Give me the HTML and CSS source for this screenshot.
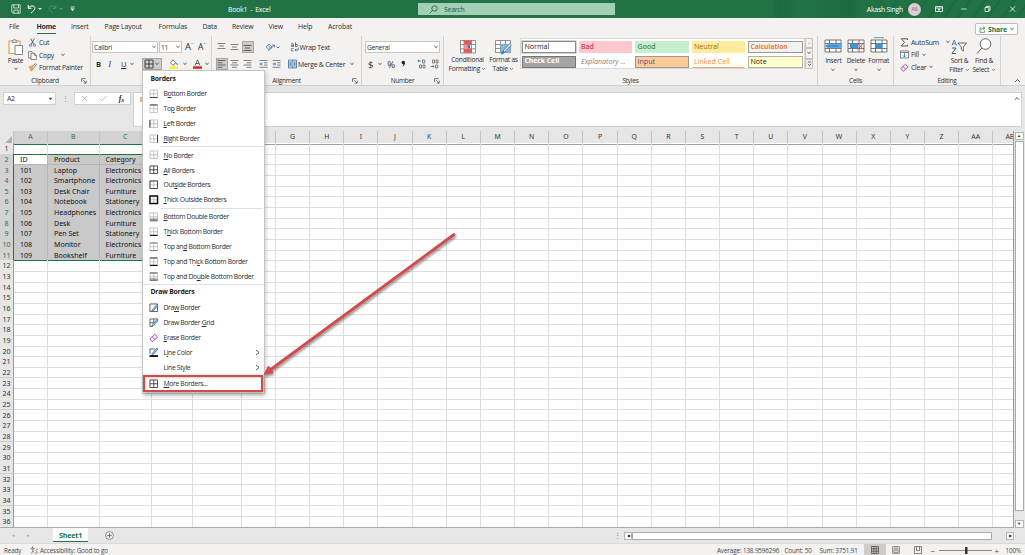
FILE: index.html
```html
<!DOCTYPE html>
<html lang="en">
<head>
<meta charset="utf-8">
<title>Book1 - Excel</title>
<link rel="stylesheet" href="styles.css">
</head>
<body>
<svg class="sprite" width="0" height="0">
  <symbol id="chev" viewBox="0 0 6 4"><path d="M1.4 1 3 2.500 4.600 1" fill="none" stroke="#444" stroke-width=".9"/></symbol>
  <symbol id="launch" viewBox="0 0 6 6"><path d="M.6 4V.6H4.500M2.300 2.300 5 5M5.200 2.600V5.200H2.600" fill="none" stroke="#555" stroke-width=".8"/></symbol>
  <symbol id="base" viewBox="0 0 10 10"><path d="M1 1H9V9H1ZM5 1V9M1 5H9" fill="none" stroke="#b4b4b4" stroke-width=".8"/></symbol>
  <symbol id="all" viewBox="0 0 10 10"><path d="M1 1H9V9H1ZM5 1V9M1 5H9" fill="none" stroke="#333" stroke-width=".9"/></symbol>
  <symbol id="pen" viewBox="0 0 10 10"><path d="M3.500 7 8.300 1.500 9.500 2.600 4.800 8 3 8.500Z" fill="#8cc4ee" stroke="#2b6fae" stroke-width=".8"/></symbol>
  <symbol id="eraser" viewBox="0 0 10 10"><path d="M1 6.300 6 1.300 9 4.200 4.200 9H3.300ZM3.300 4 6.300 7" fill="#fbeffc" stroke="#8c3a9c" stroke-width=".9"/></symbol>
  <symbol id="table" viewBox="0 0 18 14"><path d="M1 1H17V13H1ZM1 4.500H17M1 9.500H17M5.500 1V13M12 1V13" fill="#fff" stroke="#555" stroke-width=".8"/></symbol>
</svg>
<div class="app">
  <header class="titlebar">
    <div class="quick">
      <svg width="10" height="10" viewBox="0 0 10 10"><path d="M.8.800H9.200V9.200H2L.8 8ZM2.800.800V4H7.500V.8M2.800 9V6.200H7.300V9" fill="none" stroke="#e5f2ea" stroke-width=".8"/></svg>
      <svg width="16" height="10" viewBox="0 0 16 10"><path d="M1.200 1V4.300H4.500M1.500 4C4 .8 8 1.500 7.800 4.400 7.700 6.200 6 7.200 4 9" fill="none" stroke="#fff" stroke-width="1"/><path d="M11 4h4l-2 2z" fill="#d5eadd"/></svg>
      <svg width="16" height="10" viewBox="0 0 16 10"><path d="M7.800 1V4.300H4.500M7.500 4C5 .8 1 1.500 1.200 4.400 1.300 6.200 3 7.200 5 9" fill="none" stroke="#4f9770" stroke-width="1"/><path d="M11 4h4l-2 2z" fill="#4f9770"/></svg>
      <svg width="5" height="6" viewBox="0 0 5 6"><path d="M.5 1h4" stroke="#fff" stroke-width=".8"/><path d="M.3 2.500h4.400L2.500 5z" fill="#fff"/></svg>
    </div>
    <div class="doc">Book1&nbsp; -&nbsp; Excel</div>
    <div class="search"><svg width="9" height="9" viewBox="0 0 9 9"><circle cx="5.500" cy="3.500" r="2.700" fill="none" stroke="#185c37" stroke-width=".8"/><path d="M3.600 5.400.7 8.300" stroke="#185c37" stroke-width=".8"/></svg><span>Search</span></div>
    <div class="account"><span>Akash Singh</span><b class="avatar">AS</b></div>
    <div class="winbtns">
      <svg width="8" height="8" viewBox="0 0 8 8"><path d="M.5 1.500H7.500V6.500H.5ZM.5 3H7.500M4 6V3.800M3 4.800 4 3.800 5 4.800" fill="none" stroke="#fff" stroke-width=".8"/></svg>
      <svg width="6" height="8" viewBox="0 0 6 8"><path d="M.5 4H5.500" stroke="#fff" stroke-width=".8"/></svg>
      <svg width="7" height="8" viewBox="0 0 7 8"><path d="M1 2.500H4.800V6.500H1ZM2.300 2.300V1.300H6V5.300H5" fill="none" stroke="#fff" stroke-width=".8"/></svg>
      <svg width="7" height="8" viewBox="0 0 7 8"><path d="M1 1.500 6 6.500M6 1.500 1 6.500" stroke="#fff" stroke-width=".8"/></svg>
    </div>
  </header>

  <nav class="tabs">
    <span>File</span><span class="active"><b>Home</b></span><span>Insert</span><span>Page Layout</span><span>Formulas</span><span>Data</span><span>Review</span><span>View</span><span>Help</span><span>Acrobat</span>
    <div class="share"><svg width="7" height="7" viewBox="0 0 7 7"><path d="M2.500 2H1V6.300H5.500V4.500M2.300 4.300C2.500 2.800 3.500 2.200 5 2.200M4 .7 6 2.200 4.200 3.800" fill="none" stroke="#217346" stroke-width=".7"/></svg><b>Share</b><svg width="6" height="4"><use href="#chev"/></svg></div>
  </nav>

  <section class="ribbon">
    <div class="group clipboard">
      <div class="body">
        <div class="big paste"><svg width="17" height="18" viewBox="0 0 17 18"><path d="M2 3H13V15.500H2Z" fill="#fbfbfb" stroke="#eba13c" stroke-width="1.200"/><path d="M5 4.500V2.500H6.200C6.500.8 8.500.8 8.800 2.500H10V4.500Z" fill="#ddd" stroke="#777" stroke-width=".7"/><path d="M8 7.500H15.500V16.500H8Z" fill="#fff" stroke="#666" stroke-width=".8"/></svg><span>Paste</span><svg width="6" height="4"><use href="#chev"/></svg></div>
        <div class="stack">
          <div><svg width="9" height="9" viewBox="0 0 9 9"><path d="M2.700.5 5.800 6.500M6.300.5 3.200 6.500" stroke="#444" stroke-width=".8"/><circle cx="2.500" cy="7.300" r="1.100" fill="none" stroke="#2b7cc0" stroke-width=".9"/><circle cx="6.500" cy="7.300" r="1.100" fill="none" stroke="#2b7cc0" stroke-width=".9"/></svg>Cut</div>
          <div><svg width="9" height="9" viewBox="0 0 9 9"><path d="M3 7H.7V.7H4.300L5 1.500M3 2.300H6.500L8.300 4V8.500H3ZM6.300 2.300V4.200H8.300" fill="#fff" stroke="#555" stroke-width=".7"/></svg>Copy<svg class="far" width="6" height="4"><use href="#chev"/></svg></div>
          <div><svg width="9" height="9" viewBox="0 0 9 9"><path d="M.5 3.500 4 2.500 6 5.500 4 8.500 2.500 7.800Z" fill="#f1a144"/><path d="M4 3.500 7.500.7 8.500 1.800 5.500 5" fill="#fff" stroke="#555" stroke-width=".8"/></svg>Format Painter</div>
        </div>
      </div>
      <div class="caption">Clipboard<svg width="6" height="6"><use href="#launch"/></svg></div>
    </div>

    <div class="group font">
      <div class="line one">
        <div class="combo face">Calibri<svg width="6" height="4"><use href="#chev"/></svg></div><div class="combo size">11<svg width="6" height="4"><use href="#chev"/></svg></div>
        <span class="grow">A<sup>ˆ</sup></span><span class="grow small">A<sup>ˇ</sup></span>
      </div>
      <div class="line two">
        <b>B</b><i>I</i><u>U</u><svg width="6" height="4"><use href="#chev"/></svg>
        <div class="pressed bord"><svg width="10" height="10"><use href="#all"/></svg><svg width="6" height="4"><use href="#chev"/></svg></div>
        <svg width="9" height="10" viewBox="0 0 9 10"><path d="M4 .8 7 3.800 4 6.300 1.500 3.800Z" fill="#fff" stroke="#555" stroke-width=".8"/><path d="M7.500 4 8.500 6" stroke="#2b7cc0"/><path d="M0 7.300H9V9.800H0Z" fill="#fbf32c"/></svg><svg width="6" height="4"><use href="#chev"/></svg>
        <svg width="9" height="10" viewBox="0 0 9 10"><path d="M2 6.500 4.500.8 7 6.500M3 4.500H6" fill="none" stroke="#555" stroke-width=".9"/><path d="M0 7.300H9V9.800H0Z" fill="#e0262c"/></svg><svg width="6" height="4"><use href="#chev"/></svg>
      </div>
      <div class="caption hidden-part">Font</div>
    </div>

    <div class="group align">
      <div class="line al">
        <svg width="9" height="10" viewBox="0 0 9 10"><path d="M.5 1.500H8.500M2 4H7M.5 6.500H8.500" stroke="#666" stroke-width=".8"/></svg>
        <svg width="9" height="10" viewBox="0 0 9 10"><path d="M.5 2.500H8.500M2 5H7M.5 7.500H8.500" stroke="#666" stroke-width=".8"/></svg>
        <span class="pressed"><svg width="9" height="10" viewBox="0 0 9 10"><path d="M.5 3.500H8.500M2 6H7M.5 8.500H8.500" stroke="#444" stroke-width=".8"/></svg></span>
        <svg class="orient" width="17" height="10" viewBox="0 0 17 10"><path d="M1 5 4 2 7 5 4 7.500ZM3 3.500 6 6.500M3 9 9 3.500M7 3H9.500V5.500" fill="none" stroke="#41719c" stroke-width=".8"/><path d="M11.500 4.500 13 6 14.500 4.500" fill="none" stroke="#444" stroke-width=".8"/></svg>
        <div class="cmd"><svg width="9" height="10" viewBox="0 0 9 10"><path d="M1 2Q3.500 1 3.500 2.500V4.700M3.500 3.200Q1 3 1 4 1.500 5.200 3.500 4M5.500.3V4.700Q8 4.800 7.900 3.200 7.500 1.800 5.500 2.500M3.500 6.500Q1 6 1 7.700 1.200 9.500 3.500 8.900" fill="none" stroke="#555" stroke-width=".8"/><path d="M5 8H8.200V5.700M6.200 6.800 4.900 8 6.200 9.200" fill="none" stroke="#2b7cc0" stroke-width=".9"/></svg>Wrap Text</div>
      </div>
      <div class="line al two">
        <span class="pressed"><svg width="9" height="10" viewBox="0 0 9 10"><path d="M.5 1.500H8.500M.5 3.800H5.500M.5 6H8.500M.5 8.300H5.500" stroke="#444" stroke-width=".8"/></svg></span>
        <svg width="9" height="10" viewBox="0 0 9 10"><path d="M.5 1.500H8.500M2 3.800H7M.5 6H8.500M2 8.300H7" stroke="#666" stroke-width=".8"/></svg>
        <svg width="9" height="10" viewBox="0 0 9 10"><path d="M.5 1.500H8.500M3.500 3.800H8.500M.5 6H8.500M3.500 8.300H8.500" stroke="#666" stroke-width=".8"/></svg>
        <svg class="ind" width="9" height="10" viewBox="0 0 9 10"><path d="M.5 1.500H8.500M5 3.800H8.500M5 6H8.500M.5 8.300H8.500" stroke="#666" stroke-width=".8"/><path d="M4 5H1M2.300 3.500.8 5 2.300 6.500" fill="none" stroke="#2b7cc0" stroke-width=".9"/></svg>
        <svg width="9" height="10" viewBox="0 0 9 10"><path d="M.5 1.500H8.500M5 3.800H8.500M5 6H8.500M.5 8.300H8.500" stroke="#666" stroke-width=".8"/><path d="M.5 5H3.500M2.300 3.500 3.800 5 2.300 6.500" fill="none" stroke="#2b7cc0" stroke-width=".9"/></svg>
        <div class="cmd"><svg width="9" height="10" viewBox="0 0 9 10"><path d="M.5 1H8.500V9H.5Z" fill="#cfe6f8" stroke="#4a7296" stroke-width=".8"/><path d="M.5 3H8.500M.5 7H8.500M4.500 1V3M4.500 7V9" stroke="#4a7296" stroke-width=".7"/><path d="M1.500 5H7.500M3 4 1.800 5 3 6M6 4 7.200 5 6 6" fill="none" stroke="#1c6cb5" stroke-width=".7"/></svg><span class="merge">Merge &amp; Center</span><svg width="6" height="4"><use href="#chev"/></svg></div>
      </div>
      <div class="caption">Alignment<svg width="6" height="6"><use href="#launch"/></svg></div>
    </div>

    <div class="group number">
      <div class="line"><div class="combo general">General<svg width="6" height="4"><use href="#chev"/></svg></div></div>
      <div class="line num"><span>$</span><svg width="6" height="4"><use href="#chev"/></svg><span>%</span>
        <svg class="comma" width="5" height="8" viewBox="0 0 5 8"><circle cx="2.300" cy="2.500" r="1.700" fill="#222"/><path d="M4 2.500Q4 5.500 1.200 6.500 2.700 5 2.600 3.500Z" fill="#222"/></svg>
        <svg width="9" height="10" viewBox="0 0 9 10"><path d="M4 2H.8M2 .8.800 2 2 3.200" fill="none" stroke="#2b7cc0" stroke-width=".9"/><path d="M5.500 1H7.800V4H5.500ZM2.500 6H4.500V9H2.500ZM6 6H8V9H6Z" fill="none" stroke="#666" stroke-width=".8"/></svg>
        <svg width="9" height="10" viewBox="0 0 9 10"><path d="M2.500 1H4.500V4H2.500ZM6 1H8V4H6ZM5.500 6H7.800V9H5.500Z" fill="none" stroke="#666" stroke-width=".8"/><path d="M.5 7.500H4M2.800 6.300 4 7.500 2.800 8.700" fill="none" stroke="#2b7cc0" stroke-width=".9"/></svg></div>
      <div class="caption">Number<svg width="6" height="6"><use href="#launch"/></svg></div>
    </div>

    <div class="group styles">
      <div class="body">
        <div class="big cond"><svg width="16" height="14" viewBox="0 0 16 14"><path d="M.5.500H15.500V13H.5ZM.5 4.500H15.500M.5 8.800H15.500M4 .5V13M11.500.500V13" fill="#fff" stroke="#666" stroke-width=".7"/><path d="M4 .8H11V4.300H4ZM4 9H12V12.700H4Z" fill="#f0525a"/><path d="M4 4.700H8V8.600H4Z" fill="#f58d92"/><path d="M8 4.700H10V8.600H8Z" fill="#2b7cc0"/></svg><span>Conditional<br>Formatting <svg width="5" height="4"><use href="#chev"/></svg></span></div>
        <div class="big fmt"><svg width="17" height="15" viewBox="0 0 17 15"><path d="M.5.500H15.500V12.500H.5ZM.5 4.500H15.500M.5 8.500H15.500M5.500.500V12.500M10.500.500V12.500" fill="#fff" stroke="#666" stroke-width=".7"/><path d="M5.500 4.500H15.500V12.500H5.500Z" fill="#7db9ea"/><path d="M8 11 14.800 3.500 16.300 5 9.500 12Z" fill="#fff" stroke="#3a5f85" stroke-width=".7"/><path d="M5 14.300Q7 13.500 6.800 11.800L8.300 10.800 9.800 12.200Q9 14.500 5 14.300Z" fill="#2b7cc0"/></svg><span>Format as<br>Table <svg width="5" height="4"><use href="#chev"/></svg></span></div>
        <div class="gallery">
          <span class="s-normal">Normal</span><span class="s-bad">Bad</span><span class="s-good">Good</span><span class="s-neutral">Neutral</span><span class="s-calc">Calculation</span>
          <span class="s-check">Check Cell</span><span class="s-expl">Explanatory ...</span><span class="s-input">Input</span><span class="s-link">Linked Cell</span><span class="s-note">Note</span>
        </div>
        <div class="spin"><span><svg width="5" height="4" viewBox="0 0 5 4"><path d="M1 3 2.500 1.500 4 3" fill="none" stroke="#aaa" stroke-width=".7"/></svg></span><span><svg width="6" height="4"><use href="#chev"/></svg></span><span><svg width="5" height="6" viewBox="0 0 5 6"><path d="M.8 1H4.200M.8 2.800 2.500 4.500 4.200 2.800" fill="none" stroke="#444" stroke-width=".8"/></svg></span></div>
      </div>
      <div class="caption">Styles</div>
    </div>

    <div class="group cells">
      <div class="body">
        <div class="big"><svg width="18" height="14"><use href="#table"/><path d="M4 4.700H17.500V9.300H4L.5 7Z" fill="#5ea9e2"/><path d="M2.500 7H14" stroke="#1f65a5" stroke-width=".8"/></svg><span>Insert</span><svg width="6" height="4"><use href="#chev"/></svg></div>
        <div class="big"><svg width="18" height="14"><use href="#table"/><path d="M3 4.700H11V9.300H3Z" fill="#3f93d6"/><path d="M10.500 4 16.500 10.500M16.500 4 10.500 10.500" stroke="#e2474c" stroke-width="1"/></svg><span>Delete</span><svg width="6" height="4"><use href="#chev"/></svg></div>
        <div class="big"><svg width="18" height="16" viewBox="0 -2 18 16"><use href="#table" width="18" height="14"/><path d="M5.500 4.500H12.500V9.500H5.500Z" fill="#3f93d6"/><path d="M4 -1.300H14" stroke="#3f93d6" stroke-width=".9"/></svg><span>Format</span><svg width="6" height="4"><use href="#chev"/></svg></div>
      </div>
      <div class="caption">Cells</div>
    </div>

    <div class="group editing">
      <div class="body">
        <div class="stack">
          <div><svg width="9" height="9" viewBox="0 0 9 9"><path d="M7.500 2V.8H1.300L4.500 4.300 1.300 8H7.500V6.800" fill="none" stroke="#444" stroke-width=".9"/></svg>AutoSum<svg class="far" width="6" height="4"><use href="#chev"/></svg></div>
          <div><svg width="9" height="9" viewBox="0 0 9 9"><path d="M.5 1H8.500V8H.5ZM.5 2.500H8.500" fill="#fff" stroke="#555" stroke-width=".7"/><path d="M4.500 3.200V7M3 5.500 4.500 7 6 5.500" fill="none" stroke="#2b7cc0" stroke-width=".9"/></svg>Fill<svg width="6" height="4"><use href="#chev"/></svg></div>
          <div><svg width="9" height="9"><use href="#eraser"/></svg>Clear<svg width="6" height="4"><use href="#chev"/></svg></div>
        </div>
        <div class="big sort"><svg width="17" height="16" viewBox="0 0 17 16"><path d="M1 6.500 3.300 1 5.500 6.500M1.800 4.800H4.800" fill="none" stroke="#2b7cc0" stroke-width=".9"/><path d="M1 9H5L1 14.500H5.200" fill="none" stroke="#444" stroke-width=".9"/><path d="M7 4H15.500L12.300 8V12L10.300 10.500V8Z" fill="#fff" stroke="#555" stroke-width=".9"/></svg><span>Sort &amp;<br>Filter <svg width="5" height="4"><use href="#chev"/></svg></span></div>
        <div class="big find"><svg width="16" height="17" viewBox="0 0 16 17"><circle cx="9.500" cy="6" r="5.300" fill="#fff" stroke="#555" stroke-width=".9"/><path d="M6 10 1 15.500" stroke="#555" stroke-width="1"/></svg><span>Find &amp;<br>Select <svg width="5" height="4"><use href="#chev"/></svg></span></div>
      </div>
      <div class="caption">Editing</div>
    </div>
    <svg class="collapse" width="7" height="5" viewBox="0 0 7 5"><path d="M1 4 3.500 1.500 6 4" fill="none" stroke="#444" stroke-width=".9"/></svg>
  </section>

  <section class="formula">
    <div class="name">A2<svg width="5" height="4" viewBox="0 0 5 4"><path d="M.5.800H4.500L2.500 3.300Z" fill="#555"/></svg></div>
    <span class="dots">⋮</span>
    <div class="fx"><svg width="7" height="7" viewBox="0 0 7 7"><path d="M1 1 6 6M6 1 1 6" stroke="#aaa" stroke-width=".8"/></svg><svg width="8" height="7" viewBox="0 0 8 7"><path d="M.8 3.800 2.800 5.800 7.300 1" fill="none" stroke="#aaa" stroke-width=".8"/></svg><em>f<sub>x</sub></em></div>
    <div class="value"><span>ID</span><svg width="6" height="5" viewBox="0 0 7 5"><path d="M1 4 3.500 1.500 6 4" fill="none" stroke="#444" stroke-width="1"/></svg></div>
  </section>

  <main class="sheet">
    <div class="grid" id="grid"></div>
    <div class="vscroll"><span>▲</span><div class="thumb"></div><span>▼</span></div>
  </main>

  <div class="sheetbar">
    <span class="arrow">◂</span><span class="arrow">▸</span><b class="sheettab">Sheet1</b>
    <svg class="plus" width="9" height="9" viewBox="0 0 9 9"><circle cx="4.500" cy="4.500" r="4" fill="none" stroke="#777" stroke-width=".7"/><path d="M4.500 2.300V6.700M2.300 4.500H6.700" stroke="#666" stroke-width=".8"/></svg>
    <span class="grip">⋮</span>
    <div class="hscroll"><span>◀</span><div class="bar"></div><span>▶</span></div>
  </div>

  <footer class="status">
    <span class="ready">Ready</span>
    <svg width="8" height="8" viewBox="0 0 8 8"><circle cx="2.500" cy="1.300" r=".8" fill="#666"/><path d="M.5 2.800H5M2.800 3V5L1.500 7.500M2.800 5 4 6.500M7 2.500V4M7.500 6Q7 7.500 5 7.300M5.500 4.500 7.500 5.500" fill="none" stroke="#666" stroke-width=".8"/></svg>
    <span class="acc">Accessibility: Good to go</span>
    <span class="avg">Average: 138.9596296</span><span class="cnt">Count: 50</span><span class="sum">Sum: 3751.91</span>
    <div class="views">
      <span class="on"><svg width="8" height="8" viewBox="0 0 8 8"><path d="M.5.500H7.500V7.500H.5ZM.5 2.800H7.500M.5 5.200H7.500M2.800.500V7.500M5.200.500V7.500" fill="none" stroke="#444" stroke-width=".7"/></svg></span>
      <span><svg width="8" height="8" viewBox="0 0 8 8"><path d="M.5.500H7.500V7.500H.5ZM2 2H6V6.500H2ZM2.700 3.300H5.300M2.700 4.800H5.300" fill="none" stroke="#555" stroke-width=".6"/></svg></span>
      <span><svg width="8" height="8" viewBox="0 0 8 8"><path d="M.5.500H7.500V7.500H.5ZM2.500.500V4.500H5.500V.5" fill="none" stroke="#555" stroke-width=".7"/></svg></span>
    </div>
    <div class="zoom"><span>−</span><i></i><span>+</span></div><span class="pct">100%</span>
  </footer>
</div>

<div class="menu">
  <h4>Borders</h4>
  <div class="item"><svg viewBox="0 0 10 10"><use href="#base"/><path d="M1 9H9" stroke="#333"/></svg><span>B<u>o</u>ttom Border</span></div>
  <div class="item"><svg viewBox="0 0 10 10"><use href="#base"/><path d="M1 1H9" stroke="#333"/></svg><span>To<u>p</u> Border</span></div>
  <div class="item"><svg viewBox="0 0 10 10"><use href="#base"/><path d="M1 1V9" stroke="#333"/></svg><span><u>L</u>eft Border</span></div>
  <div class="item"><svg viewBox="0 0 10 10"><use href="#base"/><path d="M9 1V9" stroke="#333"/></svg><span><u>R</u>ight Border</span></div>
  <hr>
  <div class="item"><svg viewBox="0 0 10 10"><use href="#base"/></svg><span><u>N</u>o Border</span></div>
  <div class="item"><svg viewBox="0 0 10 10"><use href="#all"/></svg><span><u>A</u>ll Borders</span></div>
  <div class="item"><svg viewBox="0 0 10 10"><use href="#base"/><path d="M1 1H9V9H1Z" fill="none" stroke="#333" stroke-width=".9"/></svg><span>Out<u>s</u>ide Borders</span></div>
  <div class="item"><svg viewBox="0 0 10 10"><use href="#base"/><path d="M1 1H9V9H1Z" fill="none" stroke="#111" stroke-width="1.500"/></svg><span><u>T</u>hick Outside Borders</span></div>
  <hr>
  <div class="item"><svg viewBox="0 0 10 10"><use href="#base"/><path d="M1 7.500H9M1 9.300H9" stroke="#333" stroke-width=".8"/></svg><span><u>B</u>ottom Double Border</span></div>
  <div class="item"><svg viewBox="0 0 10 10"><use href="#base"/><path d="M1 9H9" stroke="#111" stroke-width="1.600"/></svg><span>T<u>h</u>ick Bottom Border</span></div>
  <div class="item"><svg viewBox="0 0 10 10"><use href="#base"/><path d="M1 1H9M1 9H9" stroke="#777"/></svg><span>Top an<u>d</u> Bottom Border</span></div>
  <div class="item"><svg viewBox="0 0 10 10"><use href="#base"/><path d="M1 1H9" stroke="#333"/><path d="M1 9H9" stroke="#111" stroke-width="1.600"/></svg><span>Top and Thi<u>c</u>k Bottom Border</span></div>
  <div class="item"><svg viewBox="0 0 10 10"><use href="#base"/><path d="M1 1H9M1 7.500H9M1 9.300H9" stroke="#333" stroke-width=".8"/></svg><span>Top and Do<u>u</u>ble Bottom Border</span></div>
  <hr class="full">
  <h4 class="draw">Draw Borders</h4>
  <div class="item"><svg viewBox="0 0 10 10"><path d="M1 1H9V9H1Z" fill="none" stroke="#444" stroke-width=".9"/><use href="#pen"/></svg><span>Dra<u>w</u> Border</span></div>
  <div class="item"><svg viewBox="0 0 10 10"><path d="M9 3V1H1V9H4M1 5H5M5 1V5" fill="none" stroke="#555" stroke-width=".9"/><use href="#pen"/></svg><span>Draw Border <u>G</u>rid</span></div>
  <div class="item"><svg viewBox="0 0 10 10"><use href="#eraser"/></svg><span><u>E</u>rase Border</span></div>
  <div class="item"><svg viewBox="0 0 10 10"><path d="M1 6V1H6" fill="none" stroke="#444" stroke-width=".9"/><use href="#pen" y="-1.500"/><path d="M.5 8.500H9.500" stroke="#111" stroke-width="2"/></svg><span>L<u>i</u>ne Color</span><svg class="sub" viewBox="0 0 5 7"><path d="M1 1 4 3.500 1 6" fill="none" stroke="#444" stroke-width=".9"/></svg></div>
  <div class="item"><svg viewBox="0 0 10 10"></svg><span>Line St<u>y</u>le</span><svg class="sub" viewBox="0 0 5 7"><path d="M1 1 4 3.500 1 6" fill="none" stroke="#444" stroke-width=".9"/></svg></div>
  <div class="item more"><svg viewBox="0 0 10 10"><use href="#all"/></svg><span><u>M</u>ore Borders...</span></div>
</div>
<div class="callout"></div>
<svg class="arrowline" width="200" height="150" viewBox="0 0 200 150"><path d="M195 3.500 11 139" stroke="#d34a4d" stroke-width="2.800" stroke-linecap="round"/><path d="M5 143.500 9.500 135 14 141.500Z" fill="#d34a4d" stroke="#d34a4d"/></svg>
<script src="script.js"></script>
</body>
</html>
```

FILE: styles.css
```css
* { box-sizing: border-box; }
body { margin: 0; overflow: hidden; font-family: "Open Sans", "Noto Sans", sans-serif; font-size: 6.9px; letter-spacing: -.24px; line-height: 9px; color: #2c2c2c; }
svg { display: block; flex: none; }
.sprite { position: absolute; }
.app { width: 1025px; height: 555px; display: flex; flex-direction: column; background: #e6e6e6; }

.titlebar { height: 18px; flex: none; display: flex; align-items: center; color: #fff;
  background: linear-gradient(90deg, transparent 770px, #1c6a3f 780px, #217346 800px, #1d6a40 850px, #217346 862px, transparent 900px), repeating-linear-gradient(125deg, #217346 0 9px, #1d6b41 9px 12px) 870px 0 / 155px 18px no-repeat, #217346; }
.quick { display: flex; align-items: center; width: 228px; padding-left: 11px; gap: 6px; }
.quick svg:nth-child(3) { margin-left: -1px; }
.doc { width: 190px; }
.search { width: 197px; height: 12px; background: #a3cfb5; color: #185c37; display: flex; align-items: center; padding-left: 11px; gap: 6px; }
.account { width: 319px; margin-left: -13px; display: flex; align-items: center; justify-content: flex-end; gap: 5px; }
.avatar { width: 13px; height: 13px; border-radius: 50%; background: #dccfd4; color: #806c75; font-size: 5.5px; font-weight: 400; line-height: 13px; text-align: center; }
.winbtns { flex: 1; display: flex; align-items: center; justify-content: space-between; padding: 0 9px 0 14px; }

.tabs { height: 17px; flex: none; background: #f3f2f1; display: grid; grid-template-columns: 27.5px 34.5px 33.5px 54px 44px 29.5px 36.5px 29.5px 30px 1fr 43px; padding: 0 7px 0 9px; align-items: center; letter-spacing: -.16px; }
.tabs > span { height: 15px; line-height: 15px; }
.tabs .active b { display: inline-block; line-height: 15px; height: 15px; border-bottom: 1.5px solid #217346; letter-spacing: -.3px; }
.share { height: 12px; align-self: end; background: #fff; border: 1px solid #bdbdbd; border-radius: 2px; color: #217346; display: flex; align-items: center; justify-content: space-between; padding: 0 2px 0 3px; }

.ribbon { height: 51px; flex: none; display: flex; background: #f3f2f1; border-bottom: 1px solid #d0d0d0; }
.group { height: 49px; margin-top: 1px; flex: none; border-right: 1px solid #d4d2d0; display: flex; flex-direction: column; }
.body { height: 40px; display: flex; padding-top: 2px; }
.caption { height: 9px; margin-top: auto; text-align: center; font-size: 6.5px; position: relative; line-height: 9px; }
.caption svg { position: absolute; right: 3px; top: 2px; }
.caption.hidden-part { width: 26px; margin-left: 45px; }
.line { height: 12px; margin-top: 5px; display: flex; align-items: center; }
.big { display: flex; flex-direction: column; align-items: center; text-align: center; line-height: 8.5px; font-size: 6.6px; }
.big span svg { display: inline-block; vertical-align: middle; }
.stack { margin-top: -2px; }
.stack > div { display: flex; align-items: center; gap: 2px; height: 12.7px; }
.far { margin-left: 4px; }
.pressed { background: #cfcdcb; border: 1px solid #a8a6a4; }

.clipboard { width: 91px; }
.paste { width: 28px; padding-left: 3px; }
.paste span { line-height: 9px; margin-bottom: 2px; }
.clipboard .stack { font-size: 6.8px; }
.font { width: 121px; }
.combo { height: 12px; background: #fff; border: 1px solid #c8c6c4; display: flex; align-items: center; justify-content: space-between; padding: 0 0 0 1px; font-size: 6.6px; }
.face { width: 66px; margin-left: 1px; }
.size { width: 23px; margin-left: 1px; }
.grow { margin-left: 3px; font-size: 9.5px; line-height: 10px; }
.grow.small { margin-left: 5px; font-size: 8.5px; }
.grow sup { color: #2b7cc0; font-size: 6px; line-height: 4px; vertical-align: 3px; }
.font .two { padding-left: 5px; font-size: 7.6px; }
.font .two b, .font .two i, .font .two u { width: 12.5px; }
.font .two i { font-family: "Liberation Serif", serif; }
.font .two u { width: 8px; }
.font .bord { display: flex; align-items: center; height: 12px; width: 20px; padding-left: 1px; margin: 0 7px 0 7px; }
.font .two > svg:nth-of-type(3) { margin: 0 5px 0 2px; }
.font .two > svg:nth-of-type(2), .font .two > svg:nth-of-type(4) { margin-right: 2px; }

.align { width: 150px; }
.al { display: grid; grid-template-columns: 13px 13px 19px 24.5px 1fr; padding-left: 5px; }
.al .pressed { width: 12px; height: 12px; margin-left: -1px; }
.al .orient { margin-left: 3px; }
.al.two { grid-template-columns: 13px 13px 16px 13px 12px 1fr; }
.cmd { display: flex; align-items: center; gap: 1px; padding-left: 4px; white-space: nowrap; }
.cmd .merge { margin-right: 3px; }
.al:not(.two) .cmd { padding-left: 3px; }
.number { width: 82px; }
.general { width: 75px; margin-left: 3px; }
.num { padding-left: 6px; font-size: 9.5px; gap: 4px; }
.num .comma { margin: 0 7px 0 2px; }

.styles { width: 374px; }
.cond { width: 39px; margin-left: 4px; padding-top: 2px; }
.fmt { width: 33px; padding-top: 2px; }
.cond > span, .fmt > span { margin-top: 1px; white-space: nowrap; }
.cond > svg { margin-bottom: 1px; }
.gallery { width: 285px; height: 31px; background: #fff; border: 1px solid #dcdad8; padding: 2px 1px; display: grid; grid-template-columns: repeat(4, 53.5px) 1fr; grid-template-rows: 12px 11.5px; column-gap: 3px; row-gap: 3px; font-size: 7.1px; line-height: 9px; letter-spacing: 0; margin-top: 0; }
.gallery span { padding: 0 0 0 1.5px; border: 1px solid transparent; white-space: nowrap; color: #222; overflow: hidden; }
.gallery .s-normal { border-color: #8a8a8a; box-shadow: 0 0 0 .5px #aaa; }
.gallery .s-bad { background: #ffc7ce; color: #b3202c; }
.gallery .s-good { background: #c6efce; color: #1e6b2a; }
.gallery .s-neutral { background: #ffeb9c; color: #9c6a10; }
.gallery .s-calc { background: #f2f2f2; border-color: #999; color: #ee7d22; font-weight: 700; font-size: 6.6px; }
.gallery .s-check { background: #a5a5a5; border: 1.5px double #555; color: #fff; font-weight: 700; font-size: 6.8px; outline: 1px solid #777; outline-offset: -1px; line-height: 8px; }
.gallery .s-expl { color: #7f7f7f; font-style: italic; }
.gallery .s-input { background: #ffcc99; border-color: #999; color: #505072; }
.gallery .s-link { color: #f08a34; border-bottom: 1.5px solid #f3a35f; }
.gallery .s-note { background: #ffffcc; border-color: #b2b2b2; }
.spin { width: 8px; height: 31px; display: flex; flex-direction: column; }
.spin span { flex: 1; border: 1px solid #c4c2c0; display: flex; align-items: center; justify-content: center; }

.cells { width: 76px; }
.cells .body { padding: 3px 0 0 4px; }
.cells .big { width: 22.7px; justify-content: flex-start; }
.cells .big:nth-child(3) { margin-top: -2px; }
.cells .big span { line-height: 15px; }
.editing { width: 107px; }
.editing .stack { width: 52px; padding-left: 6px; }
.editing .stack > div:nth-child(2) { margin-top: -.5px; }
.editing .sort { width: 27px; padding-top: 1px; }
.editing .find { width: 22px; padding-top: 0; }
.editing .big > span { margin-top: 2px; white-space: nowrap; }
.collapse { align-self: flex-end; margin: 0 0 2px 13px; }

.formula { height: 45px; flex: none; display: flex; padding: 6px 3px 0; }
.name { width: 53px; height: 13px; background: #fff; border: 1px solid #d0d0d0; display: flex; justify-content: space-between; align-items: center; padding: 0 2px 0 3px; }
.dots { width: 18px; text-align: center; line-height: 13px; color: #999; }
.fx { width: 57px; height: 13px; background: #fff; border: 1px solid #d0d0d0; display: flex; align-items: center; justify-content: space-between; padding: 0 6px; }
.fx em { font: italic 700 8px "Liberation Serif", serif; }
.fx sub { font-size: 6px; vertical-align: -1px; }
.value { flex: 1; margin-left: 2px; height: 35px; background: #fff; border: 1px solid #d0d0d0; display: flex; justify-content: space-between; padding: 2px 1px 0 6px; }
.value svg { margin-top: 1px; }

.sheet { height: 397px; flex: none; display: flex; }
.grid { width: 1013.5px; height: 397px; overflow: hidden; border-right: 1px solid #9b9b9b; border-bottom: 1px solid #aaa; }
.row { display: grid; grid-template-columns: 14px 34px 51.5px 52.5px 41px 49px 34px repeat(22, 34.17px); height: 10.67px; width: 1060px; background: #fff; }
.cell { border-right: 1px solid #dedede; border-bottom: 1px solid #dedede; padding-left: 6px; font: 7.05px/10.500px "Noto Sans", "Open Sans", sans-serif; letter-spacing: 0; color: #111; white-space: nowrap; }
.head { background: #e6e6e6; height: 12.2px; }
.head .cell { text-align: center; padding: 0; border-right-color: #c3c3c3; border-bottom-color: #9d9d9d; line-height: 12.5px; color: #333; font-size: 6.9px; }
.cell.no { background: #e6e6e6; padding: 0; text-align: center; border-right-color: #9d9d9d; border-bottom-color: #cfcfcf; color: #333; }
.head .cell.hot { background: #d2d2d2; color: #3e6a50; border-bottom-color: #217346; }
.cell.no.hot { background: #d2d2d2; color: #3e6a50; border-right-color: #217346; }
.cell.sel { background: #c9c9c9; border-color: #b5b5b5; }
.cell.sel.cur { background: #fff; }
.cell.first { box-shadow: inset 0 1px #217346; }
.cell.last { border-bottom-color: #217346; }
.corner { display: flex; align-items: flex-end; justify-content: flex-end; }
.head .corner svg { margin: 0 1px 1px; }
.vscroll { width: 9px; margin: 1px 0 0 1px; display: flex; flex-direction: column; font-size: 4px; letter-spacing: 0; text-align: center; color: #222; }
.vscroll span, .hscroll span { height: 8px; line-height: 6px; border: 1px solid #b5b5b5; background: #fff; }
.thumb { height: 370px; margin: 1px 0 auto; background: #fff; border: 1px solid #aaa; }

.sheetbar { height: 15px; flex: none; display: flex; padding-left: 12px; align-items: center; }
.arrow { width: 15px; color: #aaa; font-size: 5px; }
.sheettab { width: 35px; height: 14px; align-self: flex-start; margin-left: 11px; background: #fff; color: #217346; text-align: center; line-height: 15px; font-size: 7.2px; letter-spacing: -.2px; border-bottom: 1.5px solid #217346; }
.plus { margin-left: 17px; }
.grip { margin-left: 500px; width: 10px; color: #888; }
.hscroll { display: flex; width: 390px; font-size: 4px; letter-spacing: 0; text-align: center; color: #222; }
.hscroll span { width: 8px; }
.bar { width: 360px; height: 8px; background: #fff; border: 1px solid #aaa; margin-right: auto; }

.status { height: 13px; flex: none; background: #f3f2f1; border-top: 1px solid #dadada; display: flex; align-items: center; padding-left: 4px; font-size: 6.3px; letter-spacing: -.12px; color: #484848; white-space: nowrap; }
.ready { width: 26px; }
.acc { width: 679px; padding-left: 2px; }
.avg { width: 67.5px; }
.cnt { width: 35px; }
.sum { width: 44.5px; }
.views { display: flex; }
.views span { width: 21.5px; height: 12px; display: flex; align-items: center; justify-content: center; }
.views .on { background: #cfcdcb; }
.zoom { display: flex; align-items: center; width: 76px; font-size: 8px; gap: 3px; padding-left: 2px; }
.zoom i { width: 53px; height: 7px; background: linear-gradient(#333, #333) 26px 0 / 2.5px 7px no-repeat, linear-gradient(#888, #888) 0 3px / 53px 1px no-repeat; }
.zoom span { width: 5px; }
.pct { margin-left: 1px; }

.menu { position: absolute; left: 142px; top: 70px; width: 123px; height: 324px; background: #fff; border: 1px solid #c8c6c4; box-shadow: 1px 2px 4px #0003; padding-top: 1px; font-size: 6.8px; letter-spacing: -.34px; }
.menu h4 { margin: 0; height: 14px; padding-left: 7.5px; font-size: 6.8px; line-height: 13px; letter-spacing: -.22px; color: #222; }
.menu h4.draw { height: 15px; line-height: 14px; }
.item { height: 14.95px; display: flex; align-items: center; padding-left: 6px; gap: 5px; white-space: nowrap; }
.item svg { width: 9.5px; height: 9.5px; }
.item svg.sub { width: 5px; height: 7px; margin: 0 4px 0 auto; }
.item u { text-decoration-thickness: .6px; text-underline-offset: 1px; }
.menu hr { margin: .5px 1px .4px 18px; border: 0; border-top: 1px solid #e0e0e0; }
.menu hr.full { margin: 0; }
.item.more { margin-top: 1.5px; }
.callout { position: absolute; left: 143px; top: 375px; width: 120px; height: 17px; border: 2px solid #d34a4d; box-shadow: 1px 1px 3px #0006, inset 1px 1px 2px #0003; }
.arrowline { position: absolute; left: 259px; top: 231px; filter: drop-shadow(1px 2px 1px #0006); }
```

FILE: script.js
```js
const columns = [..."ABCDEFGHIJKLMNOPQRSTUVWXYZ", "AA", "AB"];
const data = [
  ["ID", "Product", "Category"],
  ["101", "Laptop", "Electronics"],
  ["102", "Smartphone", "Electronics"],
  ["103", "Desk Chair", "Furniture"],
  ["104", "Notebook", "Stationery"],
  ["105", "Headphones", "Electronics"],
  ["106", "Desk", "Furniture"],
  ["107", "Pen Set", "Stationery"],
  ["108", "Monitor", "Electronics"],
  ["109", "Bookshelf", "Furniture"]
];
const selectedColumns = 5;
const grid = document.getElementById("grid");

function addCell(row, text, names) {
  const cell = document.createElement("div");
  cell.className = "cell " + names;
  cell.textContent = text;
  row.append(cell);
  return cell;
}

function addRow(names) {
  const row = document.createElement("div");
  row.className = "row " + names;
  grid.append(row);
  return row;
}

const head = addRow("head");
addCell(head, "", "corner").innerHTML =
  '<svg width="7" height="7"><path d="M7 0V7H0Z" fill="#b0b0b0"/></svg>';
columns.forEach((name, i) => addCell(head, name, i < selectedColumns ? "hot" : ""));

for (let r = 1; r <= 36; r++) {
  const row = addRow("");
  const values = data[r - 2];
  addCell(row, r, values ? "no hot" : "no");
  columns.forEach((_, c) => {
    let names = "";
    if (values && c < selectedColumns) {
      names = "sel";
      if (r === 2) names += " first";
      if (r === 11) names += " last";
      if (r === 2 && c === 0) names += " cur";
    }
    addCell(row, values && values[c] || "", names);
  });
}
```
